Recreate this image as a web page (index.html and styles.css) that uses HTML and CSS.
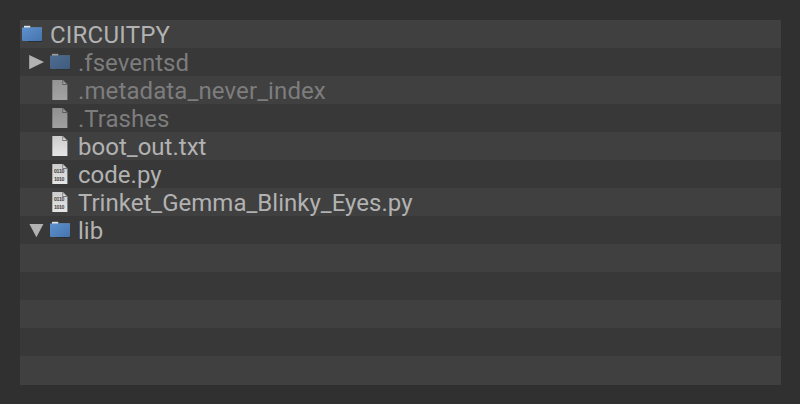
FILE: index.html
```
<!DOCTYPE html>
<html lang="en">
<head>
<meta charset="utf-8">
<title>CIRCUITPY</title>
<link rel="stylesheet" href="styles.css">
</head>
<body>
<svg class="defs" aria-hidden="true">
  <defs>
    <linearGradient id="blue" x1="0" y1="0" x2="1" y2="1"><stop offset="0" stop-color="#5d91ce"/><stop offset="1" stop-color="#4674ac"/></linearGradient>
    <linearGradient id="paper" x1="0" y1="0" x2="0" y2="1"><stop offset="0" stop-color="#cccccc"/><stop offset="1" stop-color="#e6e6e6"/></linearGradient>
    <symbol id="folder" viewBox="0 0 22 22">
      <path d="M6 18h14.5v.8H6z" fill="#262c35"/>
      <path d="M2 2.8h6.3V6H2z" fill="#e1e1e1"/>
      <path d="M8.3 4H20v2H8.3z" fill="#61758f"/>
      <path d="M0 4.6h20v12.6l-.8.9H.8l-.8-.9z" fill="url(#blue)"/>
    </symbol>
    <symbol id="file" viewBox="0 0 22 22">
      <path d="M2.3 1.1h10.7l4.4 4.4v15.6H2.3z" fill="url(#paper)"/>
      <path d="M12.3 1.1h.7l4.4 4.4v.6h-5.1z" fill="#777"/>
      <path d="M13.2 2v3.1h3.1z" fill="#ddd"/>
    </symbol>
    <symbol id="code" viewBox="0 0 22 22">
      <use href="#file" width="22" height="22"/>
      <text class="bits" x="4 6.5 9 11.5" y="10">0110</text>
      <text class="bits" x="4 6.5 9 11.5" y="18">1010</text>
    </symbol>
  </defs>
</svg>
<main class="tree">
  <div class="row root"><svg class="icon"><use href="#folder"/></svg><span class="name wide">CIRCUITPY</span></div>
  <div class="row"><svg class="arrow"><path d="M1.2 7v14.2L16 14.1z"/></svg><svg class="icon dim"><use href="#folder"/></svg><span class="name muted">.fseventsd</span></div>
  <div class="row"><span class="arrow"></span><svg class="icon dim"><use href="#file"/></svg><span class="name muted loose">.metadata_never_index</span></div>
  <div class="row"><span class="arrow"></span><svg class="icon dim"><use href="#file"/></svg><span class="name muted">.Trashes</span></div>
  <div class="row"><span class="arrow"></span><svg class="icon"><use href="#file"/></svg><span class="name">boot_out.txt</span></div>
  <div class="row"><span class="arrow"></span><svg class="icon"><use href="#code"/></svg><span class="name">code.py</span></div>
  <div class="row"><span class="arrow"></span><svg class="icon"><use href="#code"/></svg><span class="name">Trinket_Gemma_Blinky_Eyes.py</span></div>
  <div class="row"><svg class="arrow"><path d="M1.4 8h14L8.4 21.3z"/></svg><svg class="icon"><use href="#folder"/></svg><span class="name">lib</span></div>
  <div class="row"></div>
  <div class="row"></div>
  <div class="row"></div>
  <div class="row"></div>
  <div class="row"></div>
</main>
</body>
</html>
```
FILE: styles.css
```
body {
  margin: 0;
  height: 404px;
  box-sizing: border-box;
  padding: 20px 19px 19px 20px;
  background: #303030;
  overflow: hidden;
  font-family: Roboto, sans-serif;
}

.defs {
  position: absolute;
  width: 0;
  height: 0;
}

.tree {
  height: 365px;
}

.row {
  display: flex;
  align-items: center;
  height: 28px;
  padding-left: 8px;
  background: #383838;
}

.row:nth-child(odd) {
  background: #404040;
}

.row:last-child {
  height: 29px;
}

.root {
  padding-left: 2px;
}

.arrow {
  flex: none;
  width: 22px;
  height: 28px;
  fill: #b2b2b2;
}

.icon {
  flex: none;
  width: 22px;
  height: 22px;
  margin-right: 6px;
}

.dim {
  opacity: .6;
}

.name {
  padding-top: 2px;
  font-size: 24px;
  line-height: 28px;
  letter-spacing: .02px;
  color: #b2b2b2;
  white-space: pre;
}

.wide {
  letter-spacing: .22px;
}

.loose {
  letter-spacing: .11px;
}

.muted {
  color: #7d7d7d;
}

.bits {
  font: bold 5.2px "Liberation Sans", sans-serif;
  fill: #444;
}
```
